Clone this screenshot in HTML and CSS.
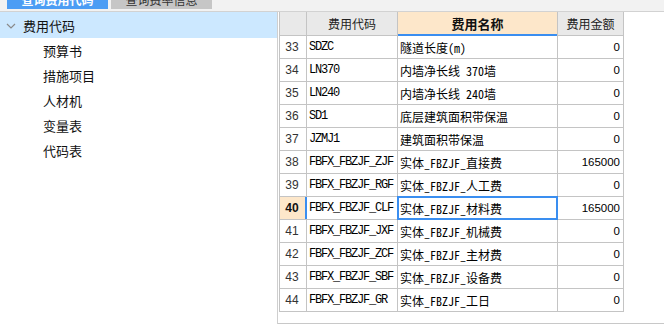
FILE: index.html
```html
<!DOCTYPE html>
<html lang="zh">
<head>
<meta charset="utf-8">
<link rel="stylesheet" href="styles.css">
</head>
<body>
<div class="page">
  <div class="tabs">
    <div class="tab active">查询费用代码</div>
    <div class="tab">查询费率信息</div>
  </div>
  <div class="main">
    <div class="tree">
      <div class="tree-head">
        <svg class="chev" width="10" height="6" viewBox="0 0 10 6"><polyline points="1,1 5,5 9,1" fill="none" stroke="#8a8a8a" stroke-width="1.2"/></svg>
        <span>费用代码</span>
      </div>
      <div class="tree-item">预算书</div>
      <div class="tree-item">措施项目</div>
      <div class="tree-item">人材机</div>
      <div class="tree-item">变量表</div>
      <div class="tree-item">代码表</div>
    </div>
    <div class="pane">
      <div class="grid">
        <div class="hd"></div>
        <div class="hd">费用代码</div>
        <div class="hd hd-active">费用名称</div>
        <div class="hd">费用金额</div>

        <div class="num">33</div><div class="code">SDZC</div><div class="name">隧道长度(m)</div><div class="amt">0</div>
        <div class="num">34</div><div class="code">LN370</div><div class="name">内墙净长线 370墙</div><div class="amt">0</div>
        <div class="num">35</div><div class="code">LN240</div><div class="name">内墙净长线 240墙</div><div class="amt">0</div>
        <div class="num">36</div><div class="code">SD1</div><div class="name">底层建筑面积带保温</div><div class="amt">0</div>
        <div class="num">37</div><div class="code">JZMJ1</div><div class="name">建筑面积带保温</div><div class="amt">0</div>
        <div class="num">38</div><div class="code">FBFX_FBZJF_ZJF</div><div class="name">实体_FBZJF_直接费</div><div class="amt">165000</div>
        <div class="num">39</div><div class="code">FBFX_FBZJF_RGF</div><div class="name">实体_FBZJF_人工费</div><div class="amt">0</div>
        <div class="num num-active">40</div><div class="code">FBFX_FBZJF_CLF</div><div class="name sel">实体_FBZJF_材料费</div><div class="amt">165000</div>
        <div class="num">41</div><div class="code">FBFX_FBZJF_JXF</div><div class="name">实体_FBZJF_机械费</div><div class="amt">0</div>
        <div class="num">42</div><div class="code">FBFX_FBZJF_ZCF</div><div class="name">实体_FBZJF_主材费</div><div class="amt">0</div>
        <div class="num">43</div><div class="code">FBFX_FBZJF_SBF</div><div class="name">实体_FBZJF_设备费</div><div class="amt">0</div>
        <div class="num">44</div><div class="code">FBFX_FBZJF_GR</div><div class="name">实体_FBZJF_工日</div><div class="amt">0</div>
      </div>
    </div>
  </div>
</div>
</body>
</html>
```
FILE: styles.css
```css
* { box-sizing: border-box; }
html, body { margin: 0; padding: 0; background: #fff; }
body { width: 664px; height: 325px; overflow: hidden; font-family: "Noto Sans CJK SC", sans-serif; }
.page { width: 664px; height: 325px; }

.tabs {
  height: 12px;
  background: #f2f2f2;
  border-bottom: 1px solid #d2d2d2;
  display: flex;
  align-items: flex-end;
  padding-left: 7px;
  gap: 3px;
  overflow: hidden;
}
.tab {
  width: 101px;
  height: 11px;
  background: #c6c6c6;
  color: #333;
  font-size: 12px;
  line-height: 12px;
  text-align: center;
  margin-top: -2px;
  display: flex;
  align-items: flex-end;
  justify-content: center;
  padding-bottom: 3px;
  align-self: flex-start;
}
.tab.active { background: #4c9df4; color: #fff; font-weight: bold; }

.main {
  display: flex;
  height: 312px;
}
.tree {
  width: 278px;
  border-right: 1px solid #cfcfcf;
  font-size: 13px;
  color: #111;
}
.tree-head {
  height: 26px;
  background: #cce8ff;
  display: flex;
  align-items: center;
  padding-left: 6px;
}
.chev { margin-right: 7px; margin-top: 1px; }
.tree-item {
  height: 25px;
  line-height: 25px;
  padding-left: 43px;
}

.pane {
  flex: 1;
  padding-left: 1px;
  border-bottom: 1px solid #c8c8c8;
}
.grid {
  display: grid;
  grid-template-columns: 26px 90px 159px 65px;
  grid-template-rows: 23px repeat(12, 22px);
  gap: 1px;
  padding: 0 1px 1px 1px;
  background: #c4c4c4;
  width: 345px;
  font-size: 12px;
  color: #000;
}
.grid > div {
  background: #fff;
  white-space: nowrap;
  overflow: hidden;
  display: flex;
  align-items: center;
}
.grid > .hd {
  background: #e9e9e9;
  justify-content: center;
  color: #222;
}
.grid > .hd-active {
  background: #fde7ca;
  font-weight: bold;
  color: #111;
  font-size: 13px;
  box-shadow: inset 0 -1px 0 #3a8ef0, 0 1px 0 #3a8ef0;
}
.num {
  justify-content: center;
  font-family: "Liberation Sans", sans-serif;
  font-size: 12px;
  color: #333;
  padding-right: 2px;
}
.grid > .num-active {
  background: #fde7ca;
  font-weight: bold;
  color: #111;
  box-shadow: inset -1px 0 0 #3a8ef0, 1px 0 0 #3a8ef0;
}
.code {
  padding-left: 2px;
  font-family: "Liberation Mono", monospace;
  font-size: 12px;
  letter-spacing: -1.2px;
}
.name {
  padding-left: 2px;
  font-feature-settings: "hwid" 1;
}
.amt {
  justify-content: flex-end;
  padding-right: 3px;
  font-family: "Liberation Sans", sans-serif;
  font-size: 11.5px;
}
.grid > .sel {
  outline: 2px solid #3a8ef0;
  outline-offset: -1px;
  position: relative;
  z-index: 1;
}
```
